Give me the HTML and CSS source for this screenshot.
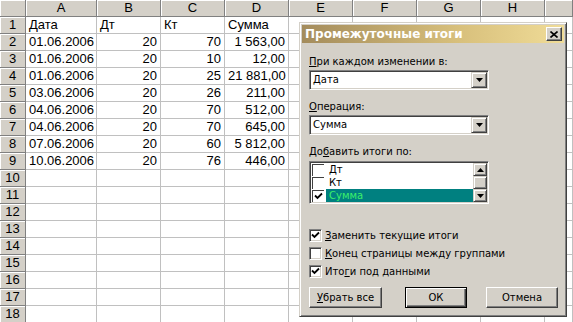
FILE: index.html
```html
<!DOCTYPE html>
<html lang="ru">
<head>
  <meta charset="UTF-8">
  <title>Промежуточные итоги</title>
  <link rel="stylesheet" href="styles.css">
</head>
<body>
  <div class="sheet" id="sheet"></div>

  <div class="dialog" role="dialog" aria-labelledby="dlg-title">
    <div class="titlebar">
      <span class="title" id="dlg-title">Промежуточные итоги</span>
      <span class="close-btn" aria-label="Закрыть">
        <svg width="8" height="7" viewBox="0 0 8 7"><path d="M0.5 0.5 L7.5 6.5 M7.5 0.5 L0.5 6.5" stroke="#000" stroke-width="1.6" fill="none"/></svg>
      </span>
    </div>

    <div class="dialog-body">
      <div class="field-label"><u>П</u>ри каждом изменении в:</div>
      <div class="combo">
        <span class="combo-value">Дата</span>
        <span class="combo-btn"><svg width="7" height="4" viewBox="0 0 7 4"><path d="M0 0 H7 L3.5 4 Z" fill="#000"/></svg></span>
      </div>

      <div class="field-label"><u>О</u>перация:</div>
      <div class="combo">
        <span class="combo-value">Сумма</span>
        <span class="combo-btn"><svg width="7" height="4" viewBox="0 0 7 4"><path d="M0 0 H7 L3.5 4 Z" fill="#000"/></svg></span>
      </div>

      <div class="field-label">До<u>б</u>авить итоги по:</div>
      <div class="listbox">
        <div class="list-items">
          <div class="list-item"><span class="list-check"></span><span class="list-text">Дт</span></div>
          <div class="list-item"><span class="list-check"></span><span class="list-text">Кт</span></div>
          <div class="list-item selected">
            <span class="list-check"><svg width="9" height="8" viewBox="0 0 9 8"><path d="M1 3.5 L3.5 6 L8 1.5" stroke="#000" stroke-width="1.8" fill="none"/></svg></span>
            <span class="list-text">Сумма</span>
          </div>
        </div>
        <div class="scrollbar">
          <span class="scroll-btn"><svg width="7" height="4" viewBox="0 0 7 4"><path d="M0 4 H7 L3.5 0 Z" fill="#000"/></svg></span>
          <span class="scroll-thumb"></span>
          <span class="scroll-btn"><svg width="7" height="4" viewBox="0 0 7 4"><path d="M0 0 H7 L3.5 4 Z" fill="#000"/></svg></span>
        </div>
      </div>

      <div class="options">
        <div class="option">
          <span class="checkbox"><svg width="9" height="8" viewBox="0 0 9 8"><path d="M1 3.5 L3.5 6 L8 1.5" stroke="#000" stroke-width="1.8" fill="none"/></svg></span>
          <span><u>З</u>аменить текущие итоги</span>
        </div>
        <div class="option">
          <span class="checkbox"></span>
          <span><u>К</u>онец страницы между группами</span>
        </div>
        <div class="option">
          <span class="checkbox"><svg width="9" height="8" viewBox="0 0 9 8"><path d="M1 3.5 L3.5 6 L8 1.5" stroke="#000" stroke-width="1.8" fill="none"/></svg></span>
          <span>Ито<u>г</u>и под данными</span>
        </div>
      </div>

      <div class="buttons">
        <button class="btn btn-clear"><u>У</u>брать все</button>
        <button class="btn btn-ok">ОК</button>
        <button class="btn btn-cancel">Отмена</button>
      </div>
    </div>
  </div>

  <script>
    // Sheet data (last column is only partly visible, so its header stays empty)
    const columns = ['A', 'B', 'C', 'D', 'E', 'F', 'G', 'H', ''];
    const data = [
      ['Дата', 'Дт', 'Кт', 'Сумма'],
      ['01.06.2006', 20, 70, '1 563,00'],
      ['01.06.2006', 20, 10, '12,00'],
      ['01.06.2006', 20, 25, '21 881,00'],
      ['03.06.2006', 20, 26, '211,00'],
      ['04.06.2006', 20, 70, '512,00'],
      ['04.06.2006', 20, 70, '645,00'],
      ['07.06.2006', 20, 60, '5 812,00'],
      ['10.06.2006', 20, 76, '446,00']
    ];

    const sheet = document.getElementById('sheet');

    function addCell(text, className) {
      const cell = document.createElement('div');
      cell.className = className;
      cell.textContent = text;
      sheet.appendChild(cell);
    }

    // Column headers
    addCell('', 'hdr corner');
    columns.forEach(letter => addCell(letter, 'hdr col-hdr'));

    // Rows
    for (let r = 1; r <= 18; r++) {
      addCell(r, 'hdr row-hdr');
      const row = data[r - 1] || [];
      columns.forEach((letter, i) => {
        const value = row[i];
        const isNumber = r > 1 && i > 0 && value !== undefined;
        addCell(value === undefined ? '' : value, isNumber ? 'cell num' : 'cell');
      });
    }
  </script>
</body>
</html>
```

FILE: styles.css
```css
body {
  margin: 0;
  width: 573px;
  height: 322px;
  overflow: hidden;
  background: #fff;
  position: relative;
  font-family: "Liberation Sans", Arial, sans-serif;
}

/* Sheet */
.sheet {
  display: grid;
  grid-template-columns: 26px 71px repeat(7, 64px) 28px;
  grid-auto-rows: 17px;
  font-size: 13px;
  color: #000;
}

.hdr,
.cell {
  box-sizing: border-box;
  line-height: 16px;
  white-space: nowrap;
  overflow: hidden;
}

.hdr {
  background: #d4d0c8;
  border-right: 1px solid #808080;
  border-bottom: 1px solid #808080;
  box-shadow: inset 1px 1px 0 #fff;
  text-align: center;
  color: #000;
}

.cell {
  border-right: 1px solid #c0c0c0;
  border-bottom: 1px solid #c0c0c0;
  padding: 0 3px 0 3px;
}

.cell.num {
  text-align: right;
}

/* Dialog window */
.dialog {
  position: absolute;
  left: 299px;
  top: 22px;
  width: 268px;
  height: 295px;
  box-sizing: border-box;
  padding: 2px;
  background: #d4d0c8;
  border: 1px solid;
  border-color: #d4d0c8 #404040 #404040 #d4d0c8;
  box-shadow: inset 1px 1px 0 #fff, inset -1px -1px 0 #808080;
  font-family: "DejaVu Sans", Tahoma, sans-serif;
  font-size: 10px;
  color: #000;
}

.titlebar {
  height: 18px;
  display: flex;
  align-items: center;
  justify-content: space-between;
  padding: 0 2px 0 3px;
  background: linear-gradient(to right, #a48c5c, #d8c07c 60%, #f0dc98);
}

.title {
  color: #fff;
  font-weight: bold;
  font-size: 12px;
}

.close-btn {
  width: 16px;
  height: 14px;
  box-sizing: border-box;
  display: flex;
  align-items: center;
  justify-content: center;
  background: #d4d0c8;
  border: 1px solid;
  border-color: #fff #404040 #404040 #fff;
  box-shadow: inset -1px -1px 0 #808080;
}

.dialog-body {
  padding: 12px 0 0 7px;
}

.field-label {
  height: 14px;
  line-height: 14px;
  margin-bottom: 1px;
}

u {
  text-decoration: underline;
  text-underline-offset: 1px;
}

/* Combo box */
.combo {
  width: 180px;
  height: 20px;
  box-sizing: border-box;
  display: flex;
  background: #fff;
  border: 1px solid;
  border-color: #808080 #fff #fff #808080;
  box-shadow: inset 1px 1px 0 #404040, inset -1px -1px 0 #d4d0c8;
  padding: 1px;
  margin-bottom: 10px;
}

.combo-value {
  flex: 1;
  line-height: 16px;
  padding-left: 2px;
}

.combo-btn,
.scroll-btn {
  width: 16px;
  box-sizing: border-box;
  display: flex;
  align-items: center;
  justify-content: center;
  background: #d4d0c8;
  border: 1px solid;
  border-color: #d4d0c8 #404040 #404040 #d4d0c8;
  box-shadow: inset 1px 1px 0 #fff, inset -1px -1px 0 #808080;
}

/* List box */
.listbox {
  width: 180px;
  height: 43px;
  box-sizing: border-box;
  display: flex;
  background: #fff;
  border: 1px solid;
  border-color: #808080 #fff #fff #808080;
  box-shadow: inset 1px 1px 0 #404040, inset -1px -1px 0 #d4d0c8;
  padding: 1px;
  margin-top: 2px;
}

.list-items {
  flex: 1;
  display: flex;
  flex-direction: column;
}

.list-item {
  height: 13px;
  display: flex;
  align-items: center;
}

.list-check {
  width: 12px;
  height: 12px;
  box-sizing: border-box;
  margin: 0 2px 0 1px;
  display: flex;
  align-items: center;
  justify-content: center;
  border-top: 1px solid #404040;
  border-left: 1px solid #404040;
  background: #fff;
}

.list-text {
  flex: 1;
  height: 13px;
  line-height: 13px;
  padding-left: 3px;
}

.list-item.selected .list-text {
  background: #008080;
  color: #3cef6a;
}

.scrollbar {
  width: 14px;
  display: flex;
  flex-direction: column;
}

.scroll-btn {
  width: 14px;
  height: 13px;
}

.scroll-thumb {
  height: 13px;
  box-sizing: border-box;
  background: #d4d0c8;
  border: 1px solid;
  border-color: #d4d0c8 #404040 #404040 #d4d0c8;
  box-shadow: inset 1px 1px 0 #fff, inset -1px -1px 0 #808080;
}

/* Check boxes */
.options {
  margin-top: 22px;
  display: flex;
  flex-direction: column;
}

.option {
  height: 18px;
  display: flex;
  align-items: center;
  gap: 3px;
}

.checkbox {
  width: 13px;
  height: 13px;
  box-sizing: border-box;
  display: flex;
  align-items: center;
  justify-content: center;
  background: #fff;
  border: 1px solid;
  border-color: #808080 #fff #fff #808080;
  box-shadow: inset 1px 1px 0 #404040, inset -1px -1px 0 #d4d0c8;
}

/* Buttons */
.buttons {
  margin-top: 7px;
  display: flex;
}

.btn {
  height: 21px;
  box-sizing: border-box;
  padding: 0;
  font-family: inherit;
  font-size: 10px;
  color: #000;
  background: #d4d0c8;
  border: 1px solid;
  border-color: #fff #404040 #404040 #fff;
  box-shadow: inset -1px -1px 0 #808080;
}

.btn-clear {
  width: 73px;
}

.btn-ok {
  width: 62px;
  margin-left: 23px;
  border-color: #000;
  box-shadow: inset 1px 1px 0 #fff, inset -1px -1px 0 #404040, inset -2px -2px 0 #808080;
}

.btn-cancel {
  width: 72px;
  margin-left: 19px;
}
```
